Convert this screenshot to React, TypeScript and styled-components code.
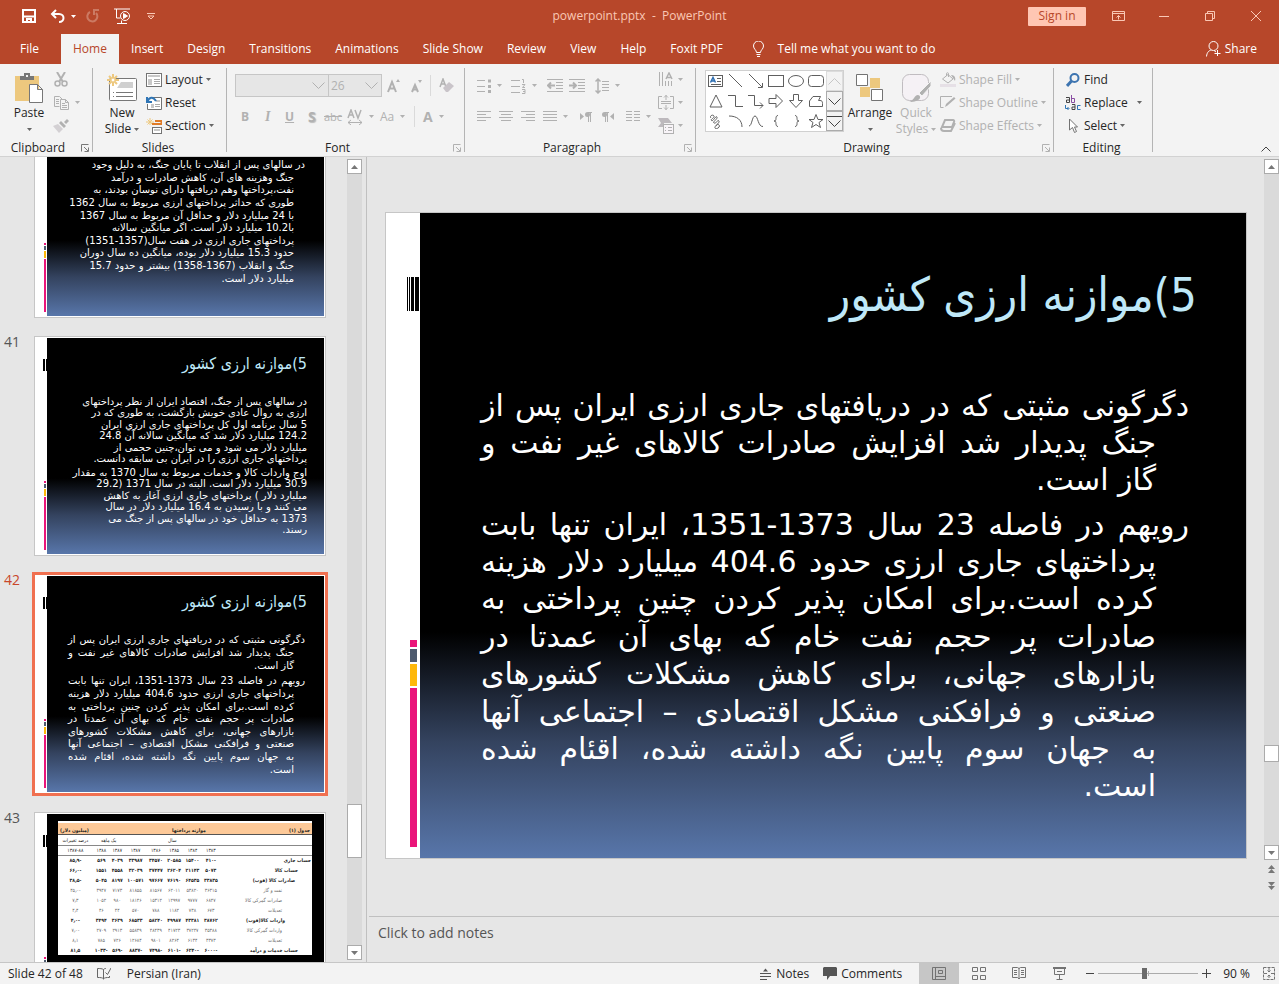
import React, { ReactNode, useLayoutEffect, useRef } from "react";
import styled, { createGlobalStyle, css } from "styled-components";

const ui = `"Open Sans", "Noto Sans", sans-serif`;
const farsi = `"DejaVu Sans Condensed", "DejaVu Sans", sans-serif`;
const farsiWide = `"DejaVu Sans", sans-serif`;
const OFF = "#b1b1b1";
const DARK = "#737373";

const Global = createGlobalStyle`
  *, *::before, *::after { box-sizing: border-box; }
  body { margin: 0; background: #e6e6e6; font: 12px/16px ${ui}; color: #262626; }
  button, select, input { font: inherit; color: inherit; margin: 0; }
  svg { display: block; flex: none; }
`;

const Shell = styled.div`
  display: flex;
  flex-direction: column;
  height: 100vh;
  overflow: hidden;
`;

const plainButton = css`
  border: 0;
  padding: 0;
  background: none;
  white-space: nowrap;
`;

/* ---------- icons ---------- */

type IconProps = { w: number; h: number; children: ReactNode; c?: string; fill?: string; sw?: number };
const Icon = ({ w, h, children, c = DARK, fill = "none", sw = 1 }: IconProps) => (
  <svg width={w} height={h} viewBox={`0 0 ${w} ${h}`} fill={fill} stroke={c} strokeWidth={sw} aria-hidden="true">
    {children}
  </svg>
);

const Caret = ({ c = "#666" }: { c?: string }) => (
  <svg width="5" height="3" viewBox="0 0 5 3" fill={c} aria-hidden="true"><path d="M0 0h5L2.500 3z" /></svg>
);

const Launcher = ({ c }: { c: string }) => (
  <Icon w={8} h={8} c={c}><path d="M7.500 0.500H0.500V7.500M3 3l4 4M7.500 3.500v4h-4" /></Icon>
);

/* ---------- title bar ---------- */

const TitleBar = styled.header`
  display: grid;
  grid-template-columns: 1fr auto 1fr;
  align-items: center;
  flex: none;
  height: 34px;
  padding-bottom: 2px;
  background: #b7472a;
  color: #fac8b5;
`;
const QuickAccess = styled.div`
  display: flex;
  align-items: center;
  padding-left: 22px;
`;
const QuickButton = styled.button<{ $gap: number }>`
  ${plainButton}
  display: flex;
  align-items: center;
  gap: 6px;
  margin-right: ${(p) => p.$gap}px;
`;
const WindowTools = styled.div`
  display: flex;
  justify-content: flex-end;
  align-items: center;
`;
const SignIn = styled.button`
  ${plainButton}
  width: 58px;
  height: 19px;
  margin-right: 9px;
  background: #ffc6b3;
  color: #b7472a;
  border-radius: 1px;
`;
const WindowButton = styled.button`
  ${plainButton}
  display: grid;
  place-items: center;
  width: 46px;
  height: 30px;
`;

/* ---------- tabs ---------- */

const TabBar = styled.nav`
  display: flex;
  flex: none;
  height: 30px;
  padding-left: 8px;
  background: #b7472a;
  color: #fff;
`;
const Tab = styled.button<{ $on?: boolean }>`
  ${plainButton}
  padding: 0 12px;
  color: ${(p) => (p.$on ? "#b7472a" : "#fff")};
  background: ${(p) => (p.$on ? "#f3f3f3" : "none")};
`;
const FileTab = styled(Tab)`
  margin-right: 10px;
`;
const TellMe = styled(Tab)`
  display: flex;
  align-items: center;
  gap: 14px;
  margin-left: 6px;
`;
const Share = styled(Tab)`
  display: flex;
  align-items: center;
  gap: 4px;
  margin-left: auto;
  padding-right: 22px;
`;

/* ---------- ribbon ---------- */

const Ribbon = styled.section`
  display: flex;
  flex: none;
  height: 93px;
  background: #f3f3f3;
  border-bottom: 1px solid #d2d2d2;
`;
const Divider = styled.div`
  flex: none;
  width: 1px;
  margin: 4px 0;
  background: #b4b4b4;
`;
const GroupBox = styled.div<{ $w: number }>`
  display: flex;
  flex-direction: column;
  flex: none;
  width: ${(p) => p.$w}px;
`;
const GroupBody = styled.div`
  display: flex;
  height: 74px;
  padding: 4px 0 0 8px;
`;
const GroupFoot = styled.div`
  display: flex;
  align-items: center;
  height: 18px;
  padding: 2px 3px 0 0;
`;
const GroupName = styled.span<{ $shift: boolean }>`
  flex: 1;
  padding-right: ${(p) => (p.$shift ? 5 : 0)}px;
  text-align: center;
`;
const LaunchButton = styled.button`
  ${plainButton}
`;
const Stack = styled.div<{ $ml?: number }>`
  display: flex;
  flex-direction: column;
  margin-left: ${(p) => p.$ml ?? 0}px;
`;
const ToolStack = styled(Stack)`
  padding-top: 2px;
`;
const Command = styled.button<{ $gap?: number }>`
  ${plainButton}
  display: flex;
  align-items: center;
  gap: ${(p) => p.$gap ?? 4}px;
  height: 23px;
  &:disabled { color: ${OFF}; }
`;
const CommandIcon = styled.span`
  display: grid;
  place-items: center;
  width: 16px;
`;
const BigButton = styled.button<{ $w: number }>`
  ${plainButton}
  display: flex;
  flex-direction: column;
  align-items: center;
  width: ${(p) => p.$w}px;
  padding-top: 2px;
  &:disabled { color: ${OFF}; }
`;
const BigIcon = styled.span`
  display: grid;
  place-items: center;
  height: 35px;
`;
const BigLine = styled.span`
  display: flex;
  justify-content: center;
  align-items: center;
  gap: 3px;
  height: 16px;
`;
const ToolRow = styled.div`
  display: flex;
  align-items: center;
  height: 31px;
`;
const Tool = styled.button<{ $w: number }>`
  ${plainButton}
  display: flex;
  align-items: center;
  gap: 6px;
  width: ${(p) => p.$w}px;
  height: 22px;
  color: ${OFF};
`;
const Letter = styled.span<{ $style?: string }>`
  font-size: 14px;
  font-weight: 700;
  ${(p) => p.$style}
`;
const Combo = styled.label<{ $w: number }>`
  display: flex;
  align-items: center;
  width: ${(p) => p.$w}px;
  height: 23px;
  padding-right: 3px;
  margin-right: -1px;
  border: 1px solid #c6c6c6;
  background: #e6e6e6;
  select {
    flex: 1;
    min-width: 0;
    height: 20px;
    padding: 0 2px;
    appearance: none;
    border: 0;
    background: none;
    color: ${OFF};
    opacity: 1;
  }
`;
const ShortLine = styled.div`
  width: 1px;
  height: 21px;
  margin-right: 8px;
  background: #dadada;
`;
const Gallery = styled.div`
  display: flex;
  height: 62px;
  margin-top: 2px;
  border: 1px solid #d0d0d0;
  background: #fff;
`;
const Shapes = styled.div`
  display: grid;
  grid-template-columns: repeat(6, 20px);
  grid-auto-rows: 20px;
`;
const ShapeButton = styled.button`
  ${plainButton}
  display: grid;
  place-items: center;
`;
const GallerySide = styled.div`
  display: grid;
  grid-template-rows: repeat(3, 20px);
  width: 17px;
`;
const GalleryStep = styled.button<{ $off?: boolean }>`
  ${plainButton}
  display: grid;
  place-items: center;
  background: #f3f3f3;
  border: 1px solid ${(p) => (p.$off ? "#dcdcdc" : "#ababab")};
`;
const Collapse = styled.button`
  ${plainButton}
  margin: auto 8px 4px auto;
`;

type GroupProps = { name: string; w: number; launch?: string; children: ReactNode };
const Group = ({ name, w, launch, children }: GroupProps) => (
  <>
    <GroupBox $w={w}>
      <GroupBody>{children}</GroupBody>
      <GroupFoot>
        <GroupName $shift={!!launch}>{name}</GroupName>
        {launch && <LaunchButton aria-label={`${name} settings`}><Launcher c={launch} /></LaunchButton>}
      </GroupFoot>
    </GroupBox>
    <Divider />
  </>
);

const shapes: [string, ReactNode][] = [
  ["Text box", <><rect x="0.500" y="2.500" width="14" height="11" /><path d="M9 5.500h4M9 8.500h4M3 11.500h10" /><path d="M2.500 9.500L5 4.500l2.500 5M3.500 8h3" stroke="#2b6cb0" strokeWidth="1.500" /></>],
  ["Line", <path d="M1 1l13 13" />],
  ["Arrow", <path d="M1 1l13 13M14.500 10v4.500H10" />],
  ["Rectangle", <rect x="0.500" y="2.500" width="15" height="11" />],
  ["Oval", <ellipse cx="8" cy="8" rx="7.500" ry="5.500" />],
  ["Rounded rectangle", <rect x="0.500" y="2.500" width="15" height="11" rx="3" />],
  ["Triangle", <path d="M8 2l6 12H2z" />],
  ["Elbow", <path d="M0 2.500h7.500v11H15" />],
  ["Elbow arrow", <path d="M0 2.500h6.500v10H15M12 9.500l3 3-3 3" />],
  ["Right arrow", <path d="M1 5.500h7V1.500l6.500 6.500L8 14.500v-4H1z" />],
  ["Down arrow", <path d="M5.500 1.500h5v6h4L8 14.500 1.500 7.500h4z" />],
  ["Freeform", <path d="M5 3.500h7.500L10.500 7.500H12c2 0 2.500 1 2.500 3v3h-13V8z" />],
  ["Scribble", <path d="M3 5c-2-2 2-4 3-2S2 6 3.500 7.500 8 2 9 4 4 9 6 10s4-4 5-2-5 5-4 7 6-1 4-3-3 1-2 1" />],
  ["Arc", <path d="M1 3c8 0 13 4 13 11" />],
  ["Curve", <path d="M1 13C4 13 4 3 7 3s3 11 8 10.500" />],
  ["Left brace", <path d="M10 2.500C7 2.500 8.500 7 7.500 7.500L6 8l1.500.500C8.500 9 7 13.500 10 13.500" />],
  ["Right brace", <path d="M7 2.500c3 0 1.500 4.500 2.500 5L11 8l-1.500.500C8.500 9 10 13.500 7 13.500" />],
  ["Star", <path d="M8 1.500l2 5h5l-4 3 1.500 5L8 11.500l-4.500 3 1.500-5-4-3h5z" />],
];

const Lines = ({ d }: { d: string }) => <Icon w={14} h={11} c={OFF}><path d={d} /></Icon>;

/* ---------- workspace ---------- */

const Workspace = styled.main`
  display: flex;
  flex: 1;
  min-height: 0;
`;
const ThumbPane = styled.aside`
  display: flex;
  flex: none;
  width: 367px;
  padding-right: 4px;
  border-right: 1px solid #c0c0c0;
`;
const ThumbList = styled.ol`
  flex: 1;
  margin: 0;
  padding: 0;
  overflow: hidden;
  list-style: none;
`;
const ThumbRow = styled.li`
  display: flex;
  height: 220px;
  margin-bottom: 18px;
`;
const ThumbNumber = styled.span<{ $on?: boolean }>`
  width: 34px;
  padding-left: 4px;
  font-size: 14px;
  line-height: 12px;
  color: ${(p) => (p.$on ? "#c9472a" : "#555")};
`;
const Thumb = styled.div<{ $on?: boolean }>`
  display: flex;
  flex: none;
  width: 292px;
  padding: 1px;
  background: #fff;
  border: 1px solid ${(p) => (p.$on ? "#fff" : "#c6c6c6")};
  box-shadow: ${(p) => (p.$on ? "0 0 0 2px #f07050" : "none")};
  outline: ${(p) => (p.$on ? "1px solid #f07050" : "none")};
  outline-offset: -1px;
`;
const Rail = styled.div<{ $w: number }>`
  display: flex;
  flex-direction: column;
  flex: none;
  width: ${(p) => p.$w}px;
  background: #fff;
`;
const Backdrop = styled.div<{ $flat?: boolean }>`
  flex: 1;
  min-width: 0;
  direction: rtl;
  color: #fff;
  font-family: ${farsi};
  background: ${(p) => (p.$flat ? "#000" : "linear-gradient(#000 65%, #34435f 82%, #5876aa)")};
`;
const Push = styled.div`
  flex: 1;
`;
const ThumbTitle = styled.h3`
  margin: 0;
  padding: 14px 17px 0 0;
  font-size: 16px;
  line-height: 24px;
  font-weight: 400;
  color: #bfe8f8;
`;
const ThumbBody = styled.div<{ $top: number; $right: number }>`
  padding: ${(p) => p.$top}px ${(p) => p.$right}px 0 21px;
  font-family: ${farsiWide};
  font-size: 10px;
`;
const Para = styled.p<{ $h: number; $hang: number; $justify?: boolean; $gap?: number }>`
  display: grid;
  grid-auto-rows: 1fr;
  align-items: center;
  height: ${(p) => p.$h}px;
  margin: 0 0 ${(p) => p.$gap ?? 0}px;
  span {
    line-height: 1;
    white-space: nowrap;
    padding-right: ${(p) => p.$hang}px;
    text-align-last: ${(p) => (p.$justify ? "justify" : "right")};
  }
  span:first-child { padding-right: 0; }
  span:last-child { text-align-last: right; }
`;
const Lined = ({ lines, ...rest }: { lines: string[]; $h: number; $hang: number; $justify?: boolean; $gap?: number }) => (
  <Para {...rest}>{lines.map((l) => <span key={l}>{l}</span>)}</Para>
);

const Bar = styled.div<{ $w: number; $h: number; $c: string; $mt?: number; $mr?: number }>`
  align-self: flex-end;
  flex: none;
  width: ${(p) => p.$w}px;
  height: ${(p) => p.$h}px;
  margin-top: ${(p) => p.$mt ?? 0}px;
  margin-right: ${(p) => p.$mr ?? 0}px;
  background: ${(p) => p.$c};
`;

const ThumbRail = () => (
  <Rail $w={11}>
    <svg width="11" height="34" viewBox="0 0 11 34" aria-hidden="true"><path d="M7 21h2v12H7zM10 21h1v12h-1z" /></svg>
    <Push />
    <Bar $w={2} $h={2} $c="#ea157a" $mr={1} />
    <Bar $w={2} $h={4} $c="#4e5b6f" $mt={1} $mr={1} />
    <Bar $w={2} $h={7} $c="#feb80a" $mt={1} $mr={1} />
    <Bar $w={2} $h={53} $c="#ea157a" $mt={1} $mr={1} />
    <svg width="11" height="4" aria-hidden="true" />
  </Rail>
);

const SlideTable = styled.table`
  width: 254px;
  margin: 7px 12px 0 auto;
  border-collapse: collapse;
  background: #fff;
  color: #222;
  font-family: ${farsi};
  font-size: 5px;
  line-height: 8px;
  text-align: center;
  caption {
    height: 14px;
    padding: 3px 2px 0;
    border-top: 2px solid #fff;
    border-bottom: 1px solid #555;
    background: #fdc998;
    color: #222;
    font-weight: 700;
  }
  td, th { padding: 0; height: 10px; font-weight: 400; white-space: nowrap; }
  thead th { border-bottom: 1px solid #888; }
`;
const Caption = styled.span`
  display: flex;
  justify-content: space-between;
`;
const NameCell = styled.th<{ $indent: number }>`
  width: 92px;
  padding-right: ${(p) => p.$indent}px !important;
  text-align: right;
`;
const DataRow = styled.tr<{ $bold?: boolean }>`
  th, td { font-weight: ${(p) => (p.$bold ? 700 : 400)}; color: ${(p) => (p.$bold ? "#222" : "#666")}; }
`;

const tableRows: [string, number, boolean, string[]][] = [
  ["حساب جاری", 1, true, ["-۴۱۰", "۱۵۴۰۰", "۲۰۵۸۵", "۳۴۵۷۰", "۳۳۹۸۷", "۴۰۳۹", "۵۶۹", "-۸۵٫۹"]],
  ["حساب کالا", 14, true, ["۵۰۷۳", "۲۱۱۴۳", "۲۶۲۰۴", "۳۷۴۴۷", "۳۲۰۳۹", "۴۵۵۸", "۱۵۵۱", "-۶۶٫۰"]],
  ["صادرات کالا (فوب)", 17, true, ["۳۳۸۳۵", "۶۴۵۳۵", "۷۶۱۹۰", "۹۷۶۶۷", "۱۰۰۵۷۱", "۸۱۹۷", "۵۰۴۵", "-۳۸٫۵"]],
  ["نفت و گاز", 30, false, ["۳۶۳۱۵", "۵۳۸۲۰", "۶۲۰۱۱", "۸۱۵۶۷", "۸۱۸۵۵", "۷۱۷۳", "۳۹۴۷", "-۴۵٫۰"]],
  ["صادرات گمرکی کالا", 30, false, ["۶۸۴۷", "۹۷۷۷", "۱۲۹۹۷", "۱۵۳۱۲", "۱۸۱۴۶", "۹۸۰", "۱۰۵۲", "۷٫۳"]],
  ["تعدیلات", 30, false, ["۶۷۳", "۷۳۸", "۱۱۸۲", "۷۸۸", "۵۷۰", "۴۴", "۴۶", "۴٫۴"]],
  ["واردات کالا(فوب)", 27, true, ["۳۸۷۶۲", "۴۳۳۸۱", "۴۹۹۸۷", "۵۸۲۴۰", "۶۸۵۳۳", "۳۶۳۹", "۳۴۹۴", "-۴٫۰"]],
  ["واردات گمرکی کالا", 30, false, ["۳۵۳۸۸", "۳۷۲۴۷", "۴۱۷۲۳", "۴۸۴۳۹", "۵۵۸۴۹", "۲۹۱۳", "۲۷۰۹", "-۷٫۰"]],
  ["تعدیلات", 30, false, ["۳۳۷۳", "۶۱۳۴", "۸۲۶۴", "۹۸۰۱", "۱۲۶۸۴", "۷۲۶", "۷۸۵", "۸٫۱"]],
  ["حساب خدمات و درآمد", 14, true, ["-۶۰۰۰", "-۶۲۴۰", "-۶۱۰۱", "-۷۴۹۸", "-۸۸۳۷", "-۵۶۹", "-۱۰۳۳", "۸۱٫۵"]],
];

const Scroll = styled.div`
  display: flex;
  flex-direction: column;
  flex: none;
  width: 15px;
  margin: 2px 0;
  background: #dadada;
`;
const ScrollButton = styled.button`
  ${plainButton}
  display: grid;
  place-items: center;
  flex: none;
  height: 15px;
  border: 1px solid #ababab;
  background: #fff;
`;
const Track = styled.div<{ $n: number }>`
  flex: ${(p) => p.$n} 1 0;
`;
const ScrollThumb = styled.div<{ $h: number }>`
  flex: none;
  height: ${(p) => p.$h}px;
  border: 1px solid #ababab;
  background: #fff;
`;
const JumpButtons = styled.div`
  display: flex;
  flex-direction: column;
  align-items: center;
  gap: 8px;
  height: 54px;
  padding-top: 5px;
  background: #e6e6e6;
`;

const Editor = styled.section`
  display: flex;
  flex-direction: column;
  flex: 1;
  min-width: 0;
  padding-left: 2px;
`;
const Stage = styled.div`
  display: flex;
  flex: 1;
  min-height: 0;
`;
const Canvas = styled.div`
  flex: 1;
  min-width: 0;
  padding: 55px 17px 0 16px;
`;
const Slide = styled.article`
  display: flex;
  aspect-ratio: 862 / 647;
  border: 1px solid #c6c6c6;
`;
const SlideTitle = styled.h1`
  margin: 0;
  padding: 47px 49px 0 0;
  font-size: 47px;
  line-height: 70px;
  font-weight: 400;
  color: #bfe8f8;
`;
const SlideBody = styled.div`
  padding: 57px 57px 0 61px;
  font-family: ${farsiWide};
  font-size: 30px;
`;
const Notes = styled.div`
  flex: none;
  height: 46px;
  padding: 7px 9px;
  border-top: 1px solid #c0c0c0;
  font-size: 14px;
  line-height: 18px;
  color: #555;
`;

/* ---------- status bar ---------- */

const Status = styled.footer`
  display: flex;
  align-items: center;
  flex: none;
  height: 22px;
  padding: 0 4px 0 8px;
  background: #f3f3f3;
  border-top: 1px solid #c6c6c6;
`;
const StatusItem = styled.button<{ $mr: number }>`
  ${plainButton}
  display: flex;
  align-items: center;
  gap: 4px;
  margin-right: ${(p) => p.$mr}px;
`;
const ViewButton = styled.button<{ $on?: boolean }>`
  ${plainButton}
  display: grid;
  place-items: center;
  width: 40px;
  height: 21px;
  background: ${(p) => (p.$on ? "#c6c6c6" : "none")};
`;
const Zoom = styled.input`
  appearance: none;
  width: 100px;
  height: 11px;
  margin: 0 4px;
  background: linear-gradient(#ababab, #ababab) center / 100% 1px no-repeat,
    linear-gradient(#ababab, #ababab) center / 1px 5px no-repeat;
  &::-webkit-slider-thumb {
    appearance: none;
    width: 5px;
    height: 11px;
    background: #6a6a6a;
  }
`;

const slide40 = [
  "در سالهای پس از انقلاب تا پایان جنگ، به دلیل وجود",
  "جنگ وهزینه های آن، کاهش صادرات و درآمد",
  "نفت،پرداختها وهم دریافتها دارای نوسان بودند، به",
  "طوری که حداثر پرداختهای ارزی مربوط به سال 1362",
  "با 24 میلیارد دلار  و حداقل آن مربوط به سال 1367",
  "با10.2 میلیارد دلار است. اگر میانگین سالانه",
  "پرداختهای جاری ارزی در هفت سال(1357-1351)",
  "حدود 15.3 میلیارد دلار بوده،  میانگین ده سال دوران",
  "جنگ و انقلاب (1367-1358) بیشتر و حدود 15.7",
  "میلیارد دلار است.",
];
const slide41a = [
  "در سالهای پس از جنگ، اقتصاد ایران از نظر پرداختهای",
  "ارزی به روال عادی خویش بازگشت، به طوری که در",
  "5 سال برنامه اول کل پرداختهای جاری ارزي ایران",
  "124.2 میلیارد دلار شد که میانگین سالانه آن 24.8",
  "میلیارد دلار می شود و می توان،چنین حجمی از",
  "پرداختهای جاری ارزی را در ایران بی سابقه دانست.",
];
const slide41b = [
  "اوج واردات کالا و خدمات مربوط به سال 1370 به مقدار",
  "30.9 میلیارد دلار است. البته در سال 1371 (29.2",
  "میلیارد دلار ) پرداختهای جاری ارزی آغاز به کاهش",
  "می کنند و با رسیدن به 16.4 میلیارد دلار در سال",
  "1373 به حداقل خود در سالهای پس از جنگ می",
  "رسند.",
];
const slide42a = [
  "دگرگونی مثبتی که در دریافتهای جاری ارزی ایران پس از",
  "جنگ پدیدار شد افزایش صادرات کالاهای غیر نفت و",
  "گاز است.",
];
const slide42b = [
  "رویهم در فاصله 23 سال 1373-1351، ایران تنها بابت",
  "پرداختهای جاری ارزی حدود 404.6 میلیارد دلار هزینه",
  "کرده است.برای امکان پذیر کردن چنین پرداختی به",
  "صادرات پر حجم نفت خام که بهای آن عمدتا در",
  "بازارهای جهانی، برای کاهش مشکلات کشورهای",
  "صنعتی و فرافکنی مشکل اقتصادی – اجتماعی آنها",
  "به جهان سوم پایین نگه داشته شده، اقئام شده",
  "است.",
];
const heading = "5)موازنه ارزی کشور";

const UpArrow = () => <svg width="7" height="4" viewBox="0 0 7 4" fill="#777" aria-hidden="true"><path d="M0 4h7L3.500 0z" /></svg>;
const DownArrow = () => <svg width="7" height="4" viewBox="0 0 7 4" fill="#777" aria-hidden="true"><path d="M0 0h7L3.500 4z" /></svg>;

const Thumbnails = () => {
  const list = useRef<HTMLOListElement>(null);
  useLayoutEffect(() => {
    if (list.current) list.current.scrollTop = 59;
  }, []);
  return (
    <ThumbPane>
      <ThumbList ref={list}>
        <ThumbRow>
          <ThumbNumber />
          <Thumb>
            <ThumbRail />
            <Backdrop>
              <ThumbBody $top={59} $right={19}>
                <Lined lines={slide40} $h={126} $hang={11} />
              </ThumbBody>
            </Backdrop>
          </Thumb>
        </ThumbRow>
        <ThumbRow>
          <ThumbNumber>41</ThumbNumber>
          <Thumb>
            <ThumbRail />
            <Backdrop>
              <ThumbTitle>{heading}</ThumbTitle>
              <ThumbBody $top={20} $right={17}>
                <Lined lines={slide41a} $h={69} $hang={0} $gap={2} />
                <Lined lines={slide41b} $h={69} $hang={0} />
              </ThumbBody>
            </Backdrop>
          </Thumb>
        </ThumbRow>
        <ThumbRow>
          <ThumbNumber $on>42</ThumbNumber>
          <Thumb $on>
            <ThumbRail />
            <Backdrop>
              <ThumbTitle>{heading}</ThumbTitle>
              <ThumbBody $top={20} $right={19}>
                <Lined lines={slide42a} $h={38} $hang={11} $gap={3} $justify />
                <Lined lines={slide42b} $h={101} $hang={11} $justify />
              </ThumbBody>
            </Backdrop>
          </Thumb>
        </ThumbRow>
        <ThumbRow>
          <ThumbNumber>43</ThumbNumber>
          <Thumb>
            <ThumbRail />
            <Backdrop $flat>
              <SlideTable>
                <caption><Caption><span>جدول (۱)</span><span>موازنه پرداختها</span><span>(میلیون دلار)</span></Caption></caption>
                <thead>
                  <tr><NameCell $indent={0} /><th colSpan={5}>سال</th><th colSpan={2}>یک ماهه</th><th>درصد تغییرات</th></tr>
                  <tr><NameCell $indent={0} />{["۱۳۸۳", "۱۳۸۴", "۱۳۸۵", "۱۳۸۶", "۱۳۸۷", "۱۳۸۷", "۱۳۸۸", "۱۳۸۷-۸۸"].map((y, i) => <th key={i}>{y}</th>)}</tr>
                </thead>
                <tbody>
                  {tableRows.map(([name, indent, bold, cells], i) => (
                    <DataRow key={i} $bold={bold}>
                      <NameCell $indent={indent}>{name}</NameCell>
                      {cells.map((c, j) => <td key={j}>{c}</td>)}
                    </DataRow>
                  ))}
                </tbody>
              </SlideTable>
            </Backdrop>
          </Thumb>
        </ThumbRow>
      </ThumbList>
      <Scroll>
        <ScrollButton aria-label="Scroll up"><UpArrow /></ScrollButton>
        <Track $n={630} />
        <ScrollThumb $h={54} />
        <Track $n={87} />
        <ScrollButton aria-label="Scroll down"><DownArrow /></ScrollButton>
      </Scroll>
    </ThumbPane>
  );
};

export default function App() {
  return (
    <Shell>
      <Global />
      <TitleBar>
        <QuickAccess>
          <QuickButton $gap={14} aria-label="Save">
            <Icon w={14} h={14} c="#fff" sw={2}><path d="M1 1h12v12H1z" /><path d="M1 7.500h12M5 13v-3h4v3" /></Icon>
          </QuickButton>
          <QuickButton $gap={10} aria-label="Undo">
            <Icon w={15} h={14} c="#fff" sw={2}><path d="M6 1L2 5l4 4M2 5h7c6 0 6 8 0 8" /></Icon><Caret c="#fff" />
          </QuickButton>
          <QuickButton $gap={15} aria-label="Redo">
            <Icon w={13} h={14} c="#cc7a63" sw={2}><path d="M4 3a5 5 0 1 0 6 1M8 6V1h5" /></Icon>
          </QuickButton>
          <QuickButton $gap={17} aria-label="Start slide show">
            <Icon w={16} h={16} c="#fff"><path d="M0 1h16M2.500 1v9h4M3 15.500h10M7.500 12.500v3" /><circle cx="11" cy="8" r="4.500" /><path d="M9.500 5.500v5L13.500 8z" fill="#fff" /></Icon>
          </QuickButton>
          <QuickButton $gap={0} aria-label="Customize toolbar">
            <Icon w={8} h={7} c="#fac8b5"><path d="M0 .500h8M1 3l3 3 3-3z" /></Icon>
          </QuickButton>
        </QuickAccess>
        <span>powerpoint.pptx&nbsp; -&nbsp; PowerPoint</span>
        <WindowTools>
          <SignIn>Sign in</SignIn>
          <WindowButton aria-label="Ribbon display options">
            <Icon w={13} h={10} c="#fac8b5"><path d="M.500.500h12v9H.500zM.500 2.500h12M6.500 8.500v-4M4.500 6.500l2-2 2 2" /></Icon>
          </WindowButton>
          <WindowButton aria-label="Minimize"><Icon w={10} h={10} c="#fac8b5"><path d="M0 5.500h10" /></Icon></WindowButton>
          <WindowButton aria-label="Restore"><Icon w={10} h={10} c="#fac8b5"><path d="M.500 2.500h7v7h-7zM2.500 2.500v-2h7v7h-2" /></Icon></WindowButton>
          <WindowButton aria-label="Close"><Icon w={10} h={10} c="#fac8b5"><path d="M0 0l10 10M10 0L0 10" /></Icon></WindowButton>
        </WindowTools>
      </TitleBar>

      <TabBar>
        <FileTab>File</FileTab>
        <Tab $on>Home</Tab>
        {["Insert", "Design", "Transitions", "Animations", "Slide Show", "Review", "View", "Help", "Foxit PDF"].map((t) => <Tab key={t}>{t}</Tab>)}
        <TellMe>
          <Icon w={11} h={16} c="#fff"><path d="M3.500 11.500C3.500 9 .500 8 .500 5a5 5 0 0 1 10 0c0 3-3 4-3 6.500zM3.500 13.500h4M4 15.500h3" /></Icon>
          Tell me what you want to do
        </TellMe>
        <Share>
          <Icon w={15} h={16} c="#fff"><circle cx="7.500" cy="5" r="4.500" /><path d="M.500 15.500C1 11 3 9.500 5.500 9M8 9.500l2 1.500M11.500 9v6M8.500 12.500h6" /></Icon>
          Share
        </Share>
      </TabBar>

      <Ribbon>
        <Group name="Clipboard" w={92} launch="#777">
          <BigButton $w={42}>
            <BigIcon>
              <Icon w={30} h={32} c="none">
                <path d="M1 4h24v25H1z" fill="#edc87e" />
                <path d="M6 8V4h4V1h6v3h4v4z" fill="#777" /><path d="M12 3h2v2h-2z" fill="#f3f3f3" />
                <path d="M15.500 12.500h8l5 5v13h-13zM23.500 12.500v5h5" fill="#fff" stroke="#777" />
              </Icon>
            </BigIcon>
            <BigLine>Paste</BigLine>
            <BigLine><Caret /></BigLine>
          </BigButton>
          <Stack $ml={3}>
            <Command disabled aria-label="Cut"><CommandIcon><Icon w={14} h={15} c={OFF} sw={2}><path d="M3 0l6 10M11 0L5 10" /><circle cx="3.500" cy="11.500" r="2.500" strokeWidth="1.500" /><circle cx="10.500" cy="11.500" r="2.500" strokeWidth="1.500" /></Icon></CommandIcon></Command>
            <Command disabled $gap={6} aria-label="Copy"><CommandIcon><Icon w={15} h={14} c={OFF}><path d="M5.500 10.500h-5V.500h5l3 3M2 3.500h3M2 5.500h3M2 7.500h3" /><path d="M6.500 3.500h5l3 3v7h-8zM11.500 3.500v3h3M8 7.500h3M8 9.500h5M8 11.500h5" /></Icon></CommandIcon><Caret c={OFF} /></Command>
            <Command disabled aria-label="Format painter"><CommandIcon><Icon w={16} h={14} c="none"><path d="M0 7l5-2 5 5-4 4z" fill="#d3d0d3" /><path d="M6 4l5 5 2-2-5-5zM11 3l3-3 2 2-3 3z" fill={OFF} /></Icon></CommandIcon></Command>
          </Stack>
        </Group>

        <Group name="Slides" w={133}>
          <BigButton $w={42}>
            <BigIcon>
              <Icon w={30} h={28} c="#777">
                <rect x="2.500" y="4.500" width="27" height="22" rx="1" fill="#fff" />
                <path d="M14 8h12v6H10z" fill="#d0d0d0" stroke="none" />
                <path d="M6 18.500h1M9 18.500h17M6 22.500h1M9 22.500h17" />
                <path d="M6 0v12M0 6h12M2 2l8 8M10 2l-8 8" stroke="#edc87e" strokeWidth="2" /><circle cx="6" cy="6" r="2" fill="#fff" stroke="#edc87e" />
              </Icon>
            </BigIcon>
            <BigLine>New</BigLine>
            <BigLine>Slide<Caret /></BigLine>
          </BigButton>
          <Stack $ml={3}>
            <Command $gap={3}><CommandIcon><Icon w={16} h={14}><rect x=".500" y=".500" width="15" height="13" fill="#fff" /><path d="M2 2h12v2H2zM2 6h4v6H2z" fill="#c8c8c8" stroke="none" /><path d="M8 6.500h6M8 8.500h6M8 10.500h6" stroke="#aaa" /></Icon></CommandIcon>Layout<Caret /></Command>
            <Command $gap={3}><CommandIcon><Icon w={16} h={14}><path d="M7 1.500h8.500v12h-14V8" fill="#fff" /><path d="M10 4h4v2h-4zM5 8h3v4H5z" fill="#c8c8c8" stroke="none" /><path d="M9 8.500h5M9 10.500h5" stroke="#aaa" /><path d="M1 1v5h5M1.500 5.500C3 1 7 0 10 5" stroke="#2f75b5" strokeWidth="2" /></Icon></CommandIcon>Reset</Command>
            <Command $gap={3}><CommandIcon><Icon w={16} h={16}><path d="M4 0v7M0 4h8M1.500 1.500l5 5M6.500 1.500l-5 5" stroke="#edc87e" /><path d="M9 3h7M6 6h9.500V3" stroke="#e07b26" strokeWidth="2" /><rect x="6.500" y="9.500" width="9" height="6" fill="#fff" /><path d="M8 11h6v2H8z" fill="#c8c8c8" stroke="none" /></Icon></CommandIcon>Section<Caret /></Command>
          </Stack>
        </Group>

        <Group name="Font" w={237} launch={OFF}>
          <ToolStack>
            <ToolRow>
              <Combo $w={94}><select disabled aria-label="Font"><option></option></select><Icon w={13} h={7} c={OFF}><path d="M.500.500l6 6 6-6" /></Icon></Combo>
              <Combo $w={54}><select disabled aria-label="Font size"><option>26</option></select><Icon w={13} h={7} c={OFF}><path d="M.500.500l6 6 6-6" /></Icon></Combo>
              <Tool $w={23} disabled aria-label="Grow font"><Icon w={20} h={14} c={OFF} sw={2}><path d="M7 13l4-10 4 10M8.500 9.500h5" /><path d="M15 3l2-3 2 3z" fill={OFF} stroke="none" /></Icon></Tool>
              <Tool $w={26} disabled aria-label="Shrink font"><Icon w={20} h={14} c={OFF} sw={2}><path d="M8 13l3-7 3 7M9.500 10.500h3" /><path d="M14 1h4l-2 3z" fill={OFF} stroke="none" /></Icon></Tool>
              <ShortLine />
              <Tool $w={16} disabled aria-label="Clear formatting"><Icon w={15} h={15} c={OFF}><path d="M1 9l3-8 3 8M2 6h4" strokeWidth="1.500" /><path d="M4 10l6-6 5 4-6 6H7z" fill="#c9c4c9" stroke="none" /></Icon></Tool>
            </ToolRow>
            <ToolRow>
              <Tool $w={22} disabled><Letter $style="padding-left:6px;font-size:12px">B</Letter></Tool>
              <Tool $w={21} disabled><Letter $style="padding-left:8px;font-style:italic;font-family:'Liberation Serif',serif">I</Letter></Tool>
              <Tool $w={22} disabled><Letter $style="padding-left:7px;font-size:12px;text-decoration:underline">U</Letter></Tool>
              <Tool $w={24} disabled><Letter $style="padding-left:8px;text-shadow:1px 1px 1px #bbb">S</Letter></Tool>
              <Tool $w={23} disabled><Letter $style="font-size:11px;font-weight:400;text-decoration:line-through">abc</Letter></Tool>
              <Tool $w={33} disabled aria-label="Character spacing"><Icon w={16} h={16} c={OFF}><path d="M1 9l3-8 3 8M2 6h4M8 1l3 8 3-8" strokeWidth="1.500" /><path d="M1 13.500h14M4 11l-3 2.500L4 16M12 11l3 2.500-3 2.500" /></Icon><Caret c={OFF} /></Tool>
              <Tool $w={34} disabled><Letter $style="font-size:12px;font-weight:400">Aa</Letter><Caret c={OFF} /></Tool>
              <ShortLine />
              <Tool $w={26} disabled><Letter>A</Letter><Caret c={OFF} /></Tool>
            </ToolRow>
          </ToolStack>
        </Group>

        <Group name="Paragraph" w={230} launch={OFF}>
          <ToolStack $ml={4}>
            <ToolRow>
              <Tool $w={34} disabled aria-label="Bullets"><Icon w={14} h={14} c={OFF}><path d="M0 1.500h8M0 7.500h8M0 12.500h8" /><path d="M11 .500h3v3h-3zM11 6h3v3h-3zM11 11h3v3h-3z" fill={OFF} stroke="none" /></Icon><Caret c={OFF} /></Tool>
              <Tool $w={36} disabled aria-label="Numbering"><Icon w={15} h={16} c={OFF}><path d="M0 2.500h9M0 8.500h9M0 14.500h9M11 1.500h1.500V5M11 6.500h3L11.500 9.500H14M11 11.500h3v4h-3M12 13.500h2" /></Icon><Caret c={OFF} /></Tool>
              <Tool $w={22} disabled aria-label="Decrease indent"><Icon w={16} h={13} c={OFF}><path d="M0 .500h16M9 3.500h7M9 6.500h7M9 9.500h7M0 12.500h16" /><path d="M1 6.500h7M4 3.500l-3 3 3 3" strokeWidth="2" /></Icon></Tool>
              <Tool $w={26} disabled aria-label="Increase indent"><Icon w={16} h={13} c={OFF}><path d="M0 .500h16M9 3.500h7M9 6.500h7M9 9.500h7M0 12.500h16" /><path d="M0 6.500h7M4 3.500l3 3-3 3" strokeWidth="2" /></Icon></Tool>
              <Tool $w={60} disabled aria-label="Line spacing"><Icon w={14} h={16} c={OFF}><path d="M3 1v14M.500 3.500L3 1l2.500 2.500M.500 12.500L3 15l2.500-2.500" strokeWidth="1.500" /><path d="M7 3.500h7M7 6.500h7M7 9.500h7M7 12.500h7" /></Icon><Caret c={OFF} /></Tool>
            </ToolRow>
            <ToolRow>
              <Tool $w={22} disabled aria-label="Align left"><Lines d="M0 .500h14M0 3.500h9M0 6.500h14M0 9.500h9" /></Tool>
              <Tool $w={22} disabled aria-label="Center"><Lines d="M0 .500h14M2 3.500h10M0 6.500h14M2 9.500h10" /></Tool>
              <Tool $w={22} disabled aria-label="Align right"><Lines d="M0 .500h14M5 3.500h9M0 6.500h14M5 9.500h9" /></Tool>
              <Tool $w={37} disabled aria-label="Justify"><Lines d="M0 .500h14M0 3.500h14M0 6.500h14M0 9.500h14" /><Caret c={OFF} /></Tool>
              <Tool $w={22} disabled aria-label="Left to right"><Icon w={12} h={10} c={OFF}><path d="M0 1l4 3.500L0 8z" fill={OFF} stroke="none" /><path d="M8.500 1v9M10.500 1v9M12 .500H8" /><circle cx="7.500" cy="2.500" r="2.500" fill={OFF} stroke="none" /></Icon></Tool>
              <Tool $w={24} disabled aria-label="Right to left"><Icon w={12} h={10} c={OFF}><path d="M12 1L8 4.500 12 8z" fill={OFF} stroke="none" /><path d="M3.500 1v9M5.500 1v9M7 .500H3" /><circle cx="2.500" cy="2.500" r="2.500" fill={OFF} stroke="none" /></Icon></Tool>
              <Tool $w={28} disabled aria-label="Columns"><Lines d="M0 .500h6M8 .500h6M0 3.500h6M8 3.500h6M0 6.500h6M8 6.500h6M0 9.500h6M8 9.500h6" /><Caret c={OFF} /></Tool>
            </ToolRow>
          </ToolStack>
          <Stack $ml={3}>
            <Command disabled aria-label="Text direction"><CommandIcon><Icon w={16} h={16} c={OFF}><path d="M1.500 0v14M4.500 0v14M7.500 9v5M10.500 9v5M13.500 9v5" /><path d="M8 7l3-6 3 6M9 5.500h4" strokeWidth="1.500" /></Icon></CommandIcon><Caret c={OFF} /></Command>
            <Command disabled aria-label="Align text"><CommandIcon><Icon w={16} h={15} c={OFF}><path d="M4 1.500H.500v12H4M12 1.500h3.500v12H12M3 6.500h10M3 8.500h10M8 0v5M8 10v5M6 2.500L8 .500l2 2M6 12.500l2 2 2-2" /></Icon></CommandIcon><Caret c={OFF} /></Command>
            <Command disabled aria-label="Convert to SmartArt"><CommandIcon><Icon w={16} h={16} c={OFF}><path d="M0 0h10l4 5H6v4H0l3-4z" fill="#bdb9bd" stroke="none" /><rect x="5.500" y="6.500" width="10" height="9" fill="#f8f4f8" /><path d="M7 9.500h1M10 9.500h4M7 12.500h1M10 12.500h4" /></Icon></CommandIcon><Caret c={OFF} /></Command>
          </Stack>
        </Group>

        <Group name="Drawing" w={357} launch={OFF}>
          <Stack $ml={1}>
            <Gallery>
              <Shapes>
                {shapes.map(([n, art]) => <ShapeButton key={n} aria-label={n}><Icon w={16} h={16} c="#5f5f5f">{art}</Icon></ShapeButton>)}
              </Shapes>
              <GallerySide>
                <GalleryStep $off aria-label="Previous shapes"><Icon w={13} h={7} c="#c6c6c6"><path d="M.500 6.500l6-6 6 6" /></Icon></GalleryStep>
                <GalleryStep aria-label="Next shapes"><Icon w={13} h={7} c="#444"><path d="M.500.500l6 6 6-6" /></Icon></GalleryStep>
                <GalleryStep aria-label="More shapes"><Icon w={15} h={13} c="#444"><path d="M0 1.500h15M1.500 5.500l6 6 6-6" /></Icon></GalleryStep>
              </GallerySide>
            </Gallery>
          </Stack>
          <BigButton $w={52}>
            <BigIcon><Icon w={28} h={28}><path d="M14 4h10v10H14zM4 13h10v10H4z" fill="#edc87e" stroke="none" /><path d="M.500.500h11v11H.500zM15.500 15.500h11v11h-11z" fill="#fff" /></Icon></BigIcon>
            <BigLine>Arrange</BigLine>
            <BigLine><Caret /></BigLine>
          </BigButton>
          <BigButton $w={40} disabled>
            <BigIcon><Icon w={30} h={30} c="#c0bcc0"><rect x="1.500" y="1.500" width="26" height="26" rx="7" fill="#f5f1f5" /><path d="M30 8v5l-9 10-3-3z" fill={OFF} stroke="#f3f3f3" /><path d="M8 29c5-1 5-7 9-7 4 1 3 7-9 7z" fill={OFF} stroke="none" /></Icon></BigIcon>
            <BigLine>Quick</BigLine>
            <BigLine>Styles<Caret c={OFF} /></BigLine>
          </BigButton>
          <Stack $ml={4}>
            <Command disabled $gap={3}><CommandIcon><Icon w={16} h={16} c={OFF}><path d="M0 12h16v3H0z" fill="#e6e0e6" stroke="none" /><path d="M2.500 7L8 2.500 13 7l-5 4zM6.500 4V1.500c0-1 2-1 2 0V5" /><path d="M11 3c3 0 5 2 4 6l-2-3z" fill={OFF} stroke="none" /></Icon></CommandIcon>Shape Fill<Caret c={OFF} /></Command>
            <Command disabled $gap={3}><CommandIcon><Icon w={16} h={16} c={OFF}><path d="M12 1.500H.500v11h3" /><path d="M5 12l1-3 8-7 1.500 1.500-8 7z" fill={OFF} stroke="none" /></Icon></CommandIcon>Shape Outline<Caret c={OFF} /></Command>
            <Command disabled $gap={3}><CommandIcon><Icon w={16} h={14} c={OFF} sw={2}><path d="M5 1h8c1 0 1.500 1 1 2l-2 5H2z" fill="#f3f3f3" /><path d="M1 9c0 2 1 3 3 3h7l4-8" /></Icon></CommandIcon>Shape Effects<Caret c={OFF} /></Command>
          </Stack>
        </Group>

        <Group name="Editing" w={98}>
          <Stack $ml={3}>
            <Command $gap={3}><CommandIcon><Icon w={14} h={14} c="#3d74b0" sw={2}><circle cx="8.500" cy="5" r="4" /><path d="M5.500 8L1 13" strokeWidth="3" /></Icon></CommandIcon>Find</Command>
            <Command $gap={3}><CommandIcon><Icon w={16} h={16} c="#444"><path d="M1 2.500h3.500v5h-3v-2.500h3M7 9.500h3v5H7V12h3" /><path d="M6.500 0v7.500h3v-4h-3" stroke="#8a4fa3" /><path d="M15.500 10.500h-3v4h3M.500 10v3.500h3M2.500 12l1.500 1.500L2.500 15" stroke="#2f75b5" /></Icon></CommandIcon>Replace&nbsp;&nbsp;<Caret /></Command>
            <Command $gap={3}><CommandIcon><Icon w={10} h={15}><path d="M1.500 1v11l3-2.500 2 5 2-1-2-4.500h3z" fill="#fff" /></Icon></CommandIcon>Select<Caret /></Command>
          </Stack>
        </Group>
        <Collapse aria-label="Collapse ribbon"><Icon w={10} h={6} c="#444"><path d="M.500 5.500L5 1l4.500 4.500" /></Icon></Collapse>
      </Ribbon>

      <Workspace>
        <Thumbnails />
        <Editor>
          <Stage>
            <Canvas>
              <Slide>
                <Rail $w={34}>
                  <svg width="34" height="98" viewBox="0 0 34 98" aria-hidden="true"><path d="M21 64h1v34h-1zM23 64h1v34h-1zM25 64h3v34h-3zM29 64h4v34h-4z" /></svg>
                  <Push />
                  <Bar $w={7} $h={7} $c="#ea157a" $mr={3} />
                  <Bar $w={7} $h={13} $c="#4e5b6f" $mt={2} $mr={3} />
                  <Bar $w={7} $h={22} $c="#feb80a" $mt={2} $mr={3} />
                  <Bar $w={7} $h={159} $c="#ea157a" $mt={2} $mr={3} />
                  <svg width="34" height="11" aria-hidden="true" />
                </Rail>
                <Backdrop>
                  <SlideTitle>{heading}</SlideTitle>
                  <SlideBody>
                    <Lined lines={slide42a} $h={112} $hang={33} $gap={7} $justify />
                    <Lined lines={slide42b} $h={299} $hang={33} $justify />
                  </SlideBody>
                </Backdrop>
              </Slide>
            </Canvas>
            <Scroll>
              <ScrollButton aria-label="Scroll up"><UpArrow /></ScrollButton>
              <Track $n={572} />
              <ScrollThumb $h={17} />
              <Track $n={83} />
              <ScrollButton aria-label="Scroll down"><DownArrow /></ScrollButton>
              <JumpButtons>
                <LaunchButton aria-label="Previous slide"><svg width="7" height="9" fill="#777"><path d="M0 4h7L3.500 0zM0 8h7L3.500 4z" /></svg></LaunchButton>
                <LaunchButton aria-label="Next slide"><svg width="7" height="9" fill="#777"><path d="M0 0h7L3.500 4zM0 4h7L3.500 8z" /></svg></LaunchButton>
              </JumpButtons>
            </Scroll>
          </Stage>
          <Notes>Click to add notes</Notes>
        </Editor>
      </Workspace>

      <Status>
        <StatusItem $mr={14}>Slide 42 of 48</StatusItem>
        <StatusItem $mr={16} aria-label="Proofing"><Icon w={14} h={14} c="#666"><path d="M6.500 2.500C5 1.500 3 1.500.500 1.500v9c3 0 5 0 6 1.500 1-1.500 3-1.500 6-1.500V9M6.500 2.500V12M6.500 2.500C7.500 1.500 8 1.500 9 1.500M8.500 5.500l2 2L14 1" /></Icon></StatusItem>
        <StatusItem $mr={0}>Persian (Iran)</StatusItem>
        <Push />
        <StatusItem $mr={14}><Icon w={12} h={12} c="#555"><path d="M0 5.500h11M0 8.500h11M0 11.500h7" /><path d="M3 3.500h5L5.500.500z" fill="#555" stroke="none" /></Icon>Notes</StatusItem>
        <StatusItem $mr={17}><Icon w={14} h={13} c="none"><path d="M1 0h12l1 1v8H7l-3 4V9H0V1z" fill="#555" /></Icon>Comments</StatusItem>
        <ViewButton $on aria-label="Normal view"><Icon w={14} h={13}><path d="M.500.500h13v12H.500zM3.500.500v12M3.500 9.500h10M6.500 3.500h4v3h-4z" /></Icon></ViewButton>
        <ViewButton aria-label="Slide sorter"><Icon w={14} h={13}><path d="M.500.500h5v4h-5zM8.500.500h5v4h-5zM.500 8.500h5v4h-5zM8.500 8.500h5v4h-5z" /></Icon></ViewButton>
        <ViewButton aria-label="Reading view"><Icon w={14} h={13}><path d="M.500.500h5l1.500 1 1.500-1h5v10h-5L7 12l-1.500-1.500h-5zM7 1v11M2 3.500h3M2 5.500h3M2 7.500h3M9 3.500h3M9 5.500h3M9 7.500h3" /></Icon></ViewButton>
        <ViewButton aria-label="Slide show"><Icon w={13} h={13}><path d="M0 1h13" strokeWidth="2" /><path d="M1.500 2v5.500h10V2M4 4.500h5M6.500 8v4M3.500 12.500h6" /></Icon></ViewButton>
        <StatusItem $mr={0} aria-label="Zoom out"><Icon w={15} h={9} c="#444"><path d="M7 4.500h8" /></Icon></StatusItem>
        <Zoom type="range" min={0} max={100} defaultValue={46} aria-label="Zoom" />
        <StatusItem $mr={12} aria-label="Zoom in"><Icon w={9} h={9} c="#444"><path d="M0 4.500h9M4.500 0v9" /></Icon></StatusItem>
        <StatusItem $mr={13}>90 %</StatusItem>
        <StatusItem $mr={0} aria-label="Fit slide to window"><Icon w={12} h={13}><path d="M.500.500h11v12H.500zM6 1v4M6 8v4M1 6.500h3M8 6.500h3" strokeDasharray="3 1" /><path d="M4.500 3.500L6 5l1.500-1.500M4.500 9.500L6 8l1.500 1.500" /></Icon></StatusItem>
      </Status>
    </Shell>
  );
}
